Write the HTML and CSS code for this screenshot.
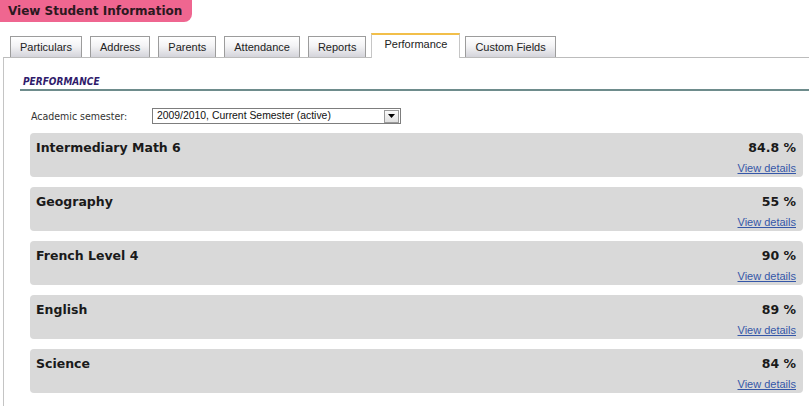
FILE: index.html
```html
<!DOCTYPE html>
<html>
<head>
<meta charset="utf-8">
<title>View Student Information</title>
<link rel="stylesheet" href="styles.css">
</head>
<body>
<div class="page-title">View Student Information</div>
<ul class="tabs">
  <li class="tab">Particulars</li>
  <li class="tab">Address</li>
  <li class="tab">Parents</li>
  <li class="tab">Attendance</li>
  <li class="tab">Reports</li>
  <li class="tab active">Performance</li>
  <li class="tab">Custom Fields</li>
</ul>
<div class="panel">
  <h2 class="section-title">PERFORMANCE</h2>
  <div class="semester-row">
    <span class="semester-label">Academic semester:</span>
    <div class="select">
      <span class="select-value">2009/2010, Current Semester (active)</span>
      <span class="select-arrow"><svg width="7" height="4" viewBox="0 0 7 4"><path d="M0 0H7L3.5 4Z" fill="#000"/></svg></span>
    </div>
  </div>
  <div class="subjects">
    <div class="subject">
      <div class="subject-name">Intermediary Math 6</div>
      <div class="subject-score">84.8 %</div>
      <a class="subject-link" href="#">View details</a>
    </div>
    <div class="subject">
      <div class="subject-name">Geography</div>
      <div class="subject-score">55 %</div>
      <a class="subject-link" href="#">View details</a>
    </div>
    <div class="subject">
      <div class="subject-name">French Level 4</div>
      <div class="subject-score">90 %</div>
      <a class="subject-link" href="#">View details</a>
    </div>
    <div class="subject">
      <div class="subject-name">English</div>
      <div class="subject-score">89 %</div>
      <a class="subject-link" href="#">View details</a>
    </div>
    <div class="subject">
      <div class="subject-name">Science</div>
      <div class="subject-score">84 %</div>
      <a class="subject-link" href="#">View details</a>
    </div>
  </div>
</div>
</body>
</html>
```

FILE: styles.css
```css
body {
  margin: 0;
  background: #fff;
  font-family: "DejaVu Sans", sans-serif;
}

.page-title {
  width: 184px;
  height: 22px;
  padding-left: 8px;
  background: #ef6690;
  border-bottom-right-radius: 8px;
  font: bold 12px/22px "DejaVu Sans", sans-serif;
  color: #2b1820;
}

.tabs {
  list-style: none;
  margin: 11px 0 -1px;
  padding: 0 0 0 10px;
  display: flex;
  gap: 8px;
  height: 25px;
  align-items: flex-start;
}

.tab {
  margin-top: 3px;
  height: 21px;
  box-sizing: border-box;
  padding: 3px 9px 0;
  border: 1px solid #9c9c9c;
  border-bottom: none;
  background: linear-gradient(#ffffff, #f3f3f5 45%, #d4d4da);
  font: 11px/15px "Liberation Sans", Arial, sans-serif;
  color: #222;
  white-space: nowrap;
}

.tab.active {
  margin: 0 -3px;
  height: 25px;
  padding: 2px 12px 0;
  border-top: 2px solid #f2bf4a;
  border-left-color: #c6c6c6;
  border-right-color: #c6c6c6;
  background: #fff;
  position: relative;
  z-index: 1;
}

.panel {
  margin-left: 3px;
  border-top: 1px solid #bcbcbc;
  border-left: 1px solid #c4c4c4;
  padding: 0 0 20px 16px;
}

.section-title {
  margin: 17px 0 0;
  padding: 0 0 1px 3px;
  font: italic bold 10px/13px "DejaVu Sans Condensed", "DejaVu Sans", sans-serif;
  color: #2f1b6b;
  border-bottom: 2px solid #6e8c8c;
}

.semester-row {
  display: flex;
  align-items: center;
  margin-top: 17px;
  padding-left: 11px;
}

.semester-label {
  width: 121px;
  font: 10.5px/14px "DejaVu Sans Condensed", "DejaVu Sans", sans-serif;
  color: #333;
}

.select {
  width: 249px;
  height: 16px;
  box-sizing: border-box;
  border: 1px solid #7d7d7d;
  display: flex;
  align-items: center;
  justify-content: space-between;
  padding: 0 1px 0 4px;
  background: #fff;
}

.select-value {
  font: 10.4px/14px "Liberation Sans", Arial, sans-serif;
  color: #111;
}

.select-arrow {
  width: 15px;
  height: 13px;
  box-sizing: border-box;
  border: 1px solid #9a9a9a;
  background: linear-gradient(#fafafa, #e0e0e0);
  display: flex;
  align-items: center;
  justify-content: center;
}

.subjects {
  display: flex;
  flex-direction: column;
  gap: 10px;
  margin: 9px 6px 0 10px;
}

.subject {
  height: 44px;
  box-sizing: border-box;
  background: #d9d9d9;
  border-radius: 4px;
  padding: 7px 7px 2px 6px;
  display: grid;
  grid-template-columns: 1fr auto;
  row-gap: 6px;
}

.subject-name,
.subject-score {
  font: bold 12.5px/16px "DejaVu Sans", sans-serif;
  color: #1a1a1a;
}

.subject-link {
  grid-column: 1 / -1;
  justify-self: end;
  font: 11px/13px "Liberation Sans", Arial, sans-serif;
  color: #3557a8;
  text-decoration: underline;
}
```
